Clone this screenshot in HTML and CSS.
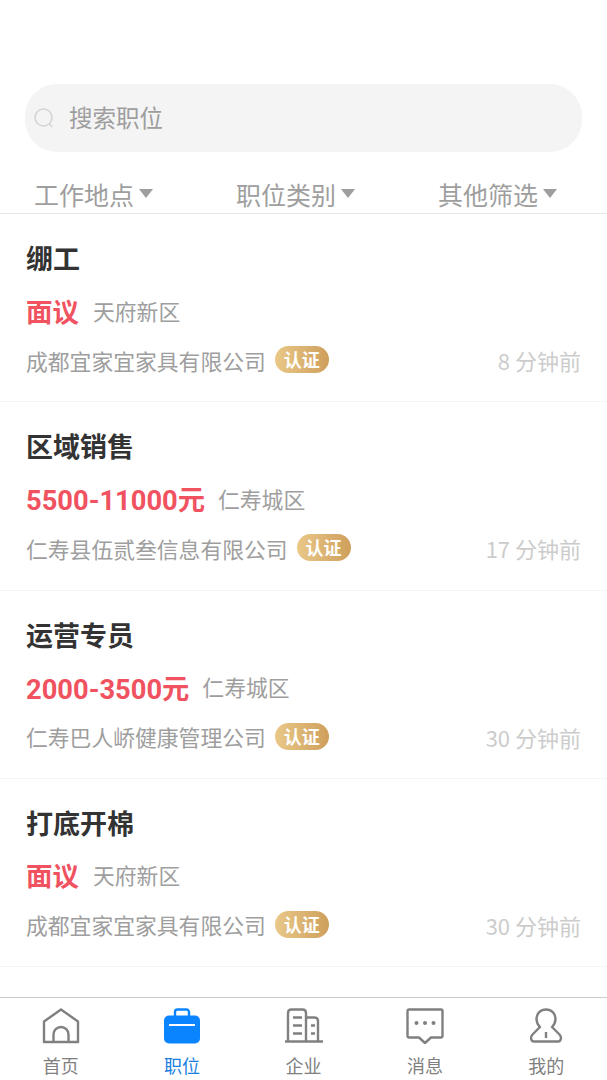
FILE: index.html
```html
<!DOCTYPE html>
<html lang="zh-CN">
<head>
    <meta charset="UTF-8">
    <title>职位</title>
    <link rel="stylesheet" href="styles.css">
</head>
<body>
    <div class="app">
        <!-- Search -->
        <div class="search">
            <svg class="search-icon" width="22" height="22" viewBox="0 0 22 22" fill="none" stroke="#d4d4d4" stroke-width="1.6"><circle cx="10.5" cy="10.5" r="8.5"/><path d="M16.5 17l2.5 3"/></svg>
            <span>搜索职位</span>
        </div>

        <!-- Filters -->
        <div class="filters">
            <div class="filter">工作地点<i class="arrow"></i></div>
            <div class="filter">职位类别<i class="arrow"></i></div>
            <div class="filter">其他筛选<i class="arrow"></i></div>
        </div>

        <!-- Job list -->
        <div class="jobs">
            <div class="job">
                <div class="job-title">绷工</div>
                <div class="job-info"><span class="salary talk">面议</span><span class="area">天府新区</span></div>
                <div class="job-foot">
                    <span class="company">成都宜家宜家具有限公司</span><span class="badge">认证</span>
                    <span class="time">8 分钟前</span>
                </div>
            </div>
            <div class="job">
                <div class="job-title">区域销售</div>
                <div class="job-info"><span class="salary">5500-11000元</span><span class="area">仁寿城区</span></div>
                <div class="job-foot">
                    <span class="company">仁寿县伍贰叁信息有限公司</span><span class="badge">认证</span>
                    <span class="time">17 分钟前</span>
                </div>
            </div>
            <div class="job">
                <div class="job-title">运营专员</div>
                <div class="job-info"><span class="salary">2000-3500元</span><span class="area">仁寿城区</span></div>
                <div class="job-foot">
                    <span class="company">仁寿巴人峤健康管理公司</span><span class="badge">认证</span>
                    <span class="time">30 分钟前</span>
                </div>
            </div>
            <div class="job">
                <div class="job-title">打底开棉</div>
                <div class="job-info"><span class="salary talk">面议</span><span class="area">天府新区</span></div>
                <div class="job-foot">
                    <span class="company">成都宜家宜家具有限公司</span><span class="badge">认证</span>
                    <span class="time">30 分钟前</span>
                </div>
            </div>
        </div>

        <!-- Tab bar -->
        <div class="tabbar">
            <div class="tab">
                <svg width="38" height="36" viewBox="0 0 38 36" fill="none" stroke="#808080" stroke-width="2.400" stroke-linejoin="round"><path d="M2 34V13.500L19 1.500l17 12V34z"/><path d="M11.500 34V26.500a7.500 7.500 0 0 1 15 0V34"/></svg>
                <span>首页</span>
            </div>
            <div class="tab active">
                <svg width="38" height="36" viewBox="0 0 38 36"><path d="M12 9V4A2.500 2.500 0 0 1 14.500 1.500h9A2.500 2.500 0 0 1 26 4V9" fill="none" stroke="#0a84ff" stroke-width="2.400"/><rect x="1" y="7.500" width="36" height="28" rx="5" fill="#0a84ff"/><rect x="6" y="16" width="26" height="2" fill="#fff"/></svg>
                <span>职位</span>
            </div>
            <div class="tab">
                <svg width="38" height="36" viewBox="0 0 38 36" fill="none" stroke="#808080" stroke-width="2.400" stroke-linejoin="round"><path d="M0 33.500h38"/><path d="M3 33V5Q3 1.500 6.500 1.500h11Q21 1.500 21 5V33"/><path d="M21 9.500h8.500Q33 9.500 33 13V33"/><path d="M8 9.500h9M8 17.500h9M8 25.500h9M26 17.500h4M26 25.500h4"/></svg>
                <span>企业</span>
            </div>
            <div class="tab">
                <svg width="38" height="36" viewBox="0 0 38 36" fill="none" stroke="#808080" stroke-width="2.400" stroke-linejoin="round"><path d="M3 1.500h32A1.500 1.500 0 0 1 36.500 3V28a1.500 1.500 0 0 1-1.500 1.500H25L19 35l-6-5.500H3A1.500 1.500 0 0 1 1.500 28V3A1.500 1.500 0 0 1 3 1.500z"/><circle cx="10.500" cy="15" r="2" fill="#808080" stroke="none"/><circle cx="19" cy="15" r="2" fill="#808080" stroke="none"/><circle cx="27.500" cy="15" r="2" fill="#808080" stroke="none"/></svg>
                <span>消息</span>
            </div>
            <div class="tab">
                <svg width="38" height="36" viewBox="0 0 38 36" fill="none" stroke="#808080" stroke-width="2.400" stroke-linejoin="round"><path d="M13 19c-2-2-3.500-5-3.500-8C9.500 5.500 13.500 1.500 19 1.500S28.500 5.500 28.500 11c0 3-1.500 6-3.500 8l7.500 7.500c2.500 2.500 1.500 7-1.500 7H7c-3 0-4-4.500-1.500-7z"/><path d="M19 24v6"/></svg>
                <span>我的</span>
            </div>
        </div>
    </div>
</body>
</html>
```

FILE: styles.css
```css
* {
    box-sizing: border-box;
}

body {
    margin: 0;
    background: #fff;
    font-family: "Noto Sans CJK SC", "Roboto", sans-serif;
}

.app {
    height: 1080px;
    display: flex;
    flex-direction: column;
    padding-top: 84px;
    overflow: hidden;
}

/* Search */
.search {
    height: 68px;
    margin: 0 25px;
    background: #f4f4f4;
    border-radius: 32px;
    display: flex;
    align-items: center;
    padding: 0 0 3px 8px;
    font-size: 23.500px;
    color: #9e9e9e;
}

.search-icon {
    margin: 3px 14px 0 0;
}

/* Filters */
.filters {
    height: 62px;
    display: grid;
    grid-template-columns: repeat(3, 202px);
    align-items: end;
    padding: 0 0 2px 34px;
    border-bottom: 1px solid #e6e6e6;
    font-size: 25px;
    color: #9e9e9e;
}

.filter {
    display: flex;
    align-items: center;
    line-height: 34px;
}

.arrow {
    width: 0;
    height: 0;
    margin: 0 0 1px 5px;
    border-left: 7px solid transparent;
    border-right: 7px solid transparent;
    border-top: 9px solid #9e9e9e;
}

/* Job list */
.jobs {
    flex: 1;
}

.job {
    height: 188.300px;
    padding: 26px 26px 0;
    border-bottom: 1px solid #f5f5f5;
}

.job-title {
    font-size: 27px;
    font-weight: 700;
    line-height: 36px;
    color: #333;
}

.job-info {
    display: flex;
    align-items: center;
    margin-top: 16px;
    height: 36px;
}

.salary {
    font-family: "Roboto", "Noto Sans CJK SC", sans-serif;
    font-size: 27.300px;
    font-weight: 700;
    color: #f0525f;
    margin-right: 13px;
}

.salary.talk {
    font-size: 26.500px;
    margin-right: 14px;
}

.area {
    font-size: 21.800px;
    color: #9e9e9e;
}

.job-foot {
    display: flex;
    align-items: center;
    margin-top: 14px;
    height: 36px;
}

.company {
    font-size: 21.800px;
    color: #9e9e9e;
}

.badge {
    width: 54px;
    height: 27px;
    margin: 0 0 1px 9px;
    border-radius: 14px;
    background: linear-gradient(90deg, #e9c888, #cf9f5c);
    color: #fff;
    font-size: 18px;
    font-weight: 700;
    line-height: 27px;
    text-align: center;
}

.time {
    margin-left: auto;
    font-size: 22px;
    color: #ccc;
}

/* Tab bar */
.tabbar {
    height: 83px;
    display: flex;
    justify-content: space-between;
    padding: 10px 0 0;
    border-top: 1px solid #ccc;
    background: #fff;
}

.tab {
    flex: 1;
    display: flex;
    flex-direction: column;
    align-items: center;
    font-size: 18px;
    line-height: 26px;
    color: #808080;
}

.tab svg {
    margin-bottom: 8px;
}

.tab.active {
    color: #1a7fe0;
}
```
